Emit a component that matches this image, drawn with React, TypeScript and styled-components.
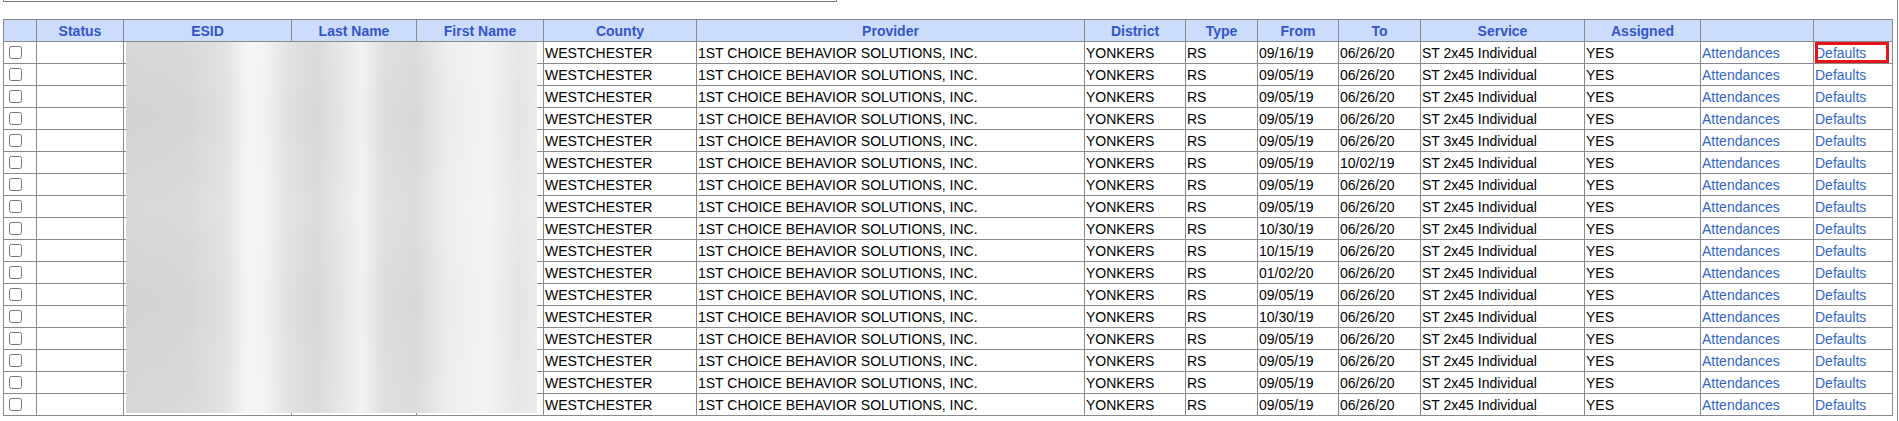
import styled, { createGlobalStyle } from "styled-components";

const GlobalStyle = createGlobalStyle`
  html, body {
    margin: 0;
    padding: 0;
    background: #ffffff;
  }
  body {
    font-family: "Liberation Sans", Arial, sans-serif;
  }
`;

const Page = styled.div`
  box-sizing: border-box;
  width: 1898px;
  height: 421px;
  padding-left: 3px;
  border-right: 1px solid #8c8c8c;
  overflow: hidden;
`;

// bottom edge of the frame that sits above the grid (cut off by the shot)
const TopFrame = styled.div`
  width: 832px;
  height: 1px;
  border: 1px solid #7a7a7a;
  border-top: 0;
`;

const TableWrap = styled.div`
  position: relative;
  width: 1890px;
  margin-top: 17px;
`;

const Grid = styled.table`
  width: 1890px;
  table-layout: fixed;
  border-collapse: collapse;
  font-family: "Liberation Sans", Arial, sans-serif;
  font-size: 14px;
  line-height: 16px;
  color: #000;
`;

const HeadCell = styled.th`
  height: 21px;
  padding: 0 1px;
  border: 1px solid #8a8a8a;
  background: #ccdcfc;
  color: #3355cc;
  font-weight: bold;
  text-align: center;
  vertical-align: middle;
  white-space: nowrap;
`;

const Cell = styled.td<{ $marked?: boolean }>`
  position: relative;
  height: 21px;
  padding: 0 1px;
  border: 1px solid #8a8a8a;
  text-align: left;
  vertical-align: middle;
  white-space: nowrap;
  overflow: hidden;

  ${({ $marked }) =>
    $marked &&
    `
    &::after {
      content: "";
      position: absolute;
      left: 1px;
      top: 0;
      right: 3px;
      bottom: 0;
      border: 3px solid #e8141c;
    }
  `}
`;

const Check = styled.input`
  display: block;
  width: 13px;
  height: 13px;
  margin: 0 0 0 4px;
`;

const RowLink = styled.a`
  color: #3366cc;
  text-decoration: none;
  cursor: pointer;
`;

// blurred-out personal data sitting over ESID / Last Name / First Name
const Redaction = styled.div`
  position: absolute;
  left: 123px;
  top: 23px;
  width: 411px;
  height: 371px;
  background:
    linear-gradient(
      180deg,
      rgba(255, 255, 255, 0.1) 0%,
      rgba(255, 255, 255, 0) 20%,
      rgba(255, 255, 255, 0.12) 45%,
      rgba(255, 255, 255, 0) 70%,
      rgba(255, 255, 255, 0.1) 100%
    ),
    linear-gradient(
      90deg,
      #d3d3d3 0px,
      #d5d5d5 60px,
      #e0e0e0 100px,
      #f5f5f5 122px,
      #f2f2f2 138px,
      #e0e0e0 162px,
      #d7d7d7 190px,
      #e6e6e6 218px,
      #f1f1f1 236px,
      #dcdcdc 258px,
      #d8d8d8 290px,
      #ececec 322px,
      #f3f3f3 360px,
      #e4e4e4 392px,
      #eaeaea 411px
    );
`;

const columns = [33, 87, 168, 125, 127, 153, 388, 101, 72, 81, 82, 164, 116, 113, 79];

const headings = [
  "",
  "Status",
  "ESID",
  "Last Name",
  "First Name",
  "County",
  "Provider",
  "District",
  "Type",
  "From",
  "To",
  "Service",
  "Assigned",
  "",
  "",
];

interface Assignment {
  from: string;
  to: string;
  service: string;
}

const assignments: Assignment[] = [
  { from: "09/16/19", to: "06/26/20", service: "ST 2x45 Individual" },
  { from: "09/05/19", to: "06/26/20", service: "ST 2x45 Individual" },
  { from: "09/05/19", to: "06/26/20", service: "ST 2x45 Individual" },
  { from: "09/05/19", to: "06/26/20", service: "ST 2x45 Individual" },
  { from: "09/05/19", to: "06/26/20", service: "ST 3x45 Individual" },
  { from: "09/05/19", to: "10/02/19", service: "ST 2x45 Individual" },
  { from: "09/05/19", to: "06/26/20", service: "ST 2x45 Individual" },
  { from: "09/05/19", to: "06/26/20", service: "ST 2x45 Individual" },
  { from: "10/30/19", to: "06/26/20", service: "ST 2x45 Individual" },
  { from: "10/15/19", to: "06/26/20", service: "ST 2x45 Individual" },
  { from: "01/02/20", to: "06/26/20", service: "ST 2x45 Individual" },
  { from: "09/05/19", to: "06/26/20", service: "ST 2x45 Individual" },
  { from: "10/30/19", to: "06/26/20", service: "ST 2x45 Individual" },
  { from: "09/05/19", to: "06/26/20", service: "ST 2x45 Individual" },
  { from: "09/05/19", to: "06/26/20", service: "ST 2x45 Individual" },
  { from: "09/05/19", to: "06/26/20", service: "ST 2x45 Individual" },
  { from: "09/05/19", to: "06/26/20", service: "ST 2x45 Individual" },
];

export default function App() {
  return (
    <>
      <GlobalStyle />
      <Page>
        <TopFrame />
        <TableWrap>
          <Grid>
            <colgroup>
              {columns.map((w, i) => (
                <col key={i} style={{ width: w }} />
              ))}
            </colgroup>
            <thead>
              <tr>
                {headings.map((h, i) => (
                  <HeadCell key={i}>{h}</HeadCell>
                ))}
              </tr>
            </thead>
            <tbody>
              {assignments.map((a, i) => (
                <tr key={i}>
                  <Cell>
                    <Check type="checkbox" />
                  </Cell>
                  <Cell />
                  <Cell />
                  <Cell />
                  <Cell />
                  <Cell>WESTCHESTER</Cell>
                  <Cell>1ST CHOICE BEHAVIOR SOLUTIONS, INC.</Cell>
                  <Cell>YONKERS</Cell>
                  <Cell>RS</Cell>
                  <Cell>{a.from}</Cell>
                  <Cell>{a.to}</Cell>
                  <Cell>{a.service}</Cell>
                  <Cell>YES</Cell>
                  <Cell>
                    <RowLink>Attendances</RowLink>
                  </Cell>
                  <Cell $marked={i === 0}>
                    <RowLink>Defaults</RowLink>
                  </Cell>
                </tr>
              ))}
            </tbody>
          </Grid>
          <Redaction />
        </TableWrap>
      </Page>
    </>
  );
}
